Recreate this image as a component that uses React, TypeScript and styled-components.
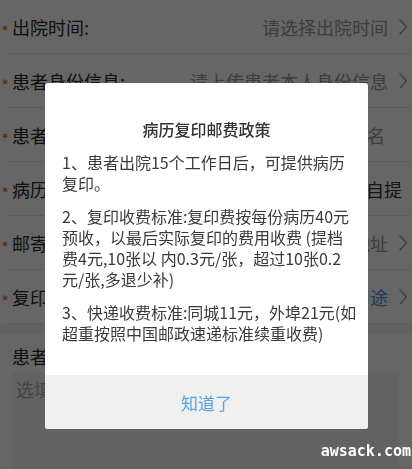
import styled, { createGlobalStyle } from "styled-components";

const GlobalStyle = createGlobalStyle`
  html, body {
    margin: 0;
    padding: 0;
    background: #ffffff;
    font-family: "Noto Sans CJK SC", "Noto Sans", sans-serif;
    overflow: hidden;
  }
`;

type Tone = "hint" | "text" | "link";

type Field = {
  label: string;
  value: string;
  tone: Tone;
  arrow: boolean;
  trail?: number;
};

const fields: Field[] = [
  { label: "出院时间:", value: "请选择出院时间", tone: "hint", arrow: true },
  { label: "患者身份信息:", value: "请上传患者本人身份信息", tone: "hint", arrow: true },
  { label: "患者姓名:", value: "请输入患者姓名", tone: "hint", arrow: false, trail: 23 },
  { label: "病历领取方式:", value: "邮寄  自提", tone: "text", arrow: false, trail: 6 },
  { label: "邮寄地址:", value: "请选择邮寄地址", tone: "hint", arrow: true },
  { label: "复印用途:", value: "请选择复印用途", tone: "link", arrow: true },
];

const App = () => {
  return (
    <Page>
      <GlobalStyle />
      <Form>
        {fields.map((f) => (
          <Row key={f.label}>
            <Star>*</Star>
            <Label>{f.label}</Label>
            <Value tone={f.tone} trail={f.trail ?? 0}>
              {f.value}
            </Value>
            {f.arrow && (
              <Chevron viewBox="0 0 10 18">
                <path d="M1.5 1.5 L8.5 9 L1.5 16.5" />
              </Chevron>
            )}
          </Row>
        ))}
      </Form>
      <Gap />
      <Section>
        <SectionTitle>患者备注</SectionTitle>
        <NoteBox>选填</NoteBox>
      </Section>

      <Overlay>
        <Dialog>
          <Body>
            <Title>病历复印邮费政策</Title>
            <Para>
              1、患者出院15个工作日后，可提供病历
              <br />
              复印。
            </Para>
            <Para>
              2、复印收费标准:复印费按每份病历40元
              <br />
              预收，以最后实际复印的费用收费 (提档
              <br />
              费4元,10张以 内0.3元/张，超过10张0.2
              <br />
              元/张,多退少补)
            </Para>
            <Para>
              3、快递收费标准:同城11元，外埠21元(如
              <br />
              超重按照中国邮政速递标准续重收费)
            </Para>
          </Body>
          <Footer>知道了</Footer>
        </Dialog>
      </Overlay>
      <Watermark>awsack.com</Watermark>
    </Page>
  );
};

const Page = styled.div`
  position: relative;
  width: 412px;
  height: 469px;
  overflow: hidden;
  background: #ffffff;
`;

const Form = styled.div`
  display: flex;
  flex-direction: column;
`;

const Row = styled.div`
  display: flex;
  align-items: center;
  height: 53px;
  margin-left: 6px;
  padding-right: 4px;
  border-bottom: 1px solid #e6e6e6;
`;

const Star = styled.span`
  width: 7px;
  margin-left: -4px;
  margin-right: 3px;
  color: #e03a3a;
  font-family: "DejaVu Sans", sans-serif;
  font-size: 12px;
  line-height: 1;
  padding-top: 7px;
`;

const Label = styled.span`
  flex: 1;
  font-size: 18px;
  color: #2a2a2a;
  white-space: nowrap;
`;

const toneColor: Record<Tone, string> = {
  hint: "#999999",
  text: "#333333",
  link: "#4f97dd",
};

const Value = styled.span<{ tone: Tone; trail: number }>`
  font-size: 18px;
  color: ${(p) => toneColor[p.tone]};
  margin-right: ${(p) => p.trail}px;
  white-space: pre;
`;

const Chevron = styled.svg`
  width: 10px;
  height: 18px;
  margin-left: 10px;
  fill: none;
  stroke: #999999;
  stroke-width: 1.3;
`;

const Gap = styled.div`
  height: 10px;
  background: #f3f3f3;
`;

const Section = styled.div`
  display: flex;
  flex-direction: column;
  padding: 12px 13px 0 12px;
`;

const SectionTitle = styled.div`
  font-size: 18px;
  line-height: 20px;
  color: #2a2a2a;
`;

const NoteBox = styled.div`
  margin-top: 7px;
  height: 140px;
  background: #f5f5f5;
  border-radius: 3px;
  padding: 5px 4px;
  font-size: 18px;
  line-height: 22px;
  color: #aaaaaa;
`;

const Overlay = styled.div`
  position: fixed;
  inset: 0;
  background: rgba(0, 0, 0, 0.6);
  display: flex;
  justify-content: center;
  align-items: flex-start;
  padding-top: 83px;
`;

const Dialog = styled.div`
  width: 323px;
  margin-left: 1px;
  background: #ffffff;
  border-radius: 3px;
  overflow: hidden;
  display: flex;
  flex-direction: column;
`;

const Body = styled.div`
  padding: 35px 10px 31px 17px;
  display: flex;
  flex-direction: column;
  gap: 12px;
`;

const Title = styled.div`
  text-align: center;
  font-size: 16px;
  line-height: 22px;
  font-weight: 500;
  color: #333333;
  margin-left: -7px;
`;

const Para = styled.div`
  font-size: 16px;
  line-height: 21px;
  color: #3a3a3a;
  white-space: nowrap;
`;

const Footer = styled.div`
  height: 54px;
  background: #f0f0f0;
  display: flex;
  align-items: center;
  justify-content: center;
  font-size: 17px;
  color: #5aa2e2;
`;

const Watermark = styled.div`
  position: absolute;
  right: 1px;
  bottom: 9px;
  font-family: "DejaVu Sans Mono", monospace;
  font-weight: bold;
  font-size: 15px;
  color: #ffffff;
`;

export default App;
